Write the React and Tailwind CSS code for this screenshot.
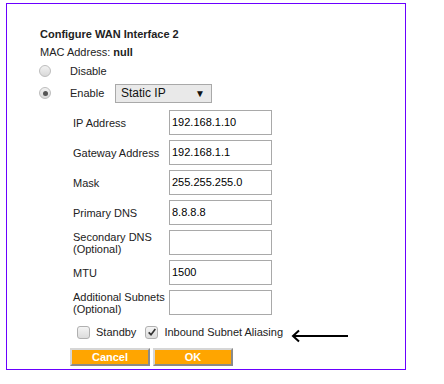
import React from 'react';

const fields = [
  { label: 'IP Address', value: '192.168.1.10' },
  { label: 'Gateway Address', value: '192.168.1.1' },
  { label: 'Mask', value: '255.255.255.0' },
  { label: 'Primary DNS', value: '8.8.8.8' },
  { label: 'Secondary DNS', sub: '(Optional)', value: '' },
  { label: 'MTU', value: '1500' },
  { label: 'Additional Subnets', sub: '(Optional)', value: '' },
];

// old-school grey radio look
const Radio = ({ checked }) => (
  <span className="w-[12px] h-[12px] rounded-full border border-[#bdbdbd] bg-gradient-to-b from-[#f2f2f2] to-[#d9d9d9] flex items-center justify-center">
    {checked && <span className="w-[5px] h-[5px] rounded-full bg-[#555]" />}
  </span>
);

const Checkbox = ({ checked }) => (
  <span className="w-[13px] h-[13px] rounded-[3px] border border-[#b0b0b0] bg-gradient-to-b from-[#f4f4f4] to-[#dcdcdc] flex items-center justify-center">
    {checked && (
      <svg viewBox="0 0 12 12" className="w-[10px] h-[10px]">
        <path d="M2 6.5 L4.8 9.2 L10 2.5" fill="none" stroke="#333" strokeWidth="2" />
      </svg>
    )}
  </span>
);

const Button = ({ children }) => (
  <button className="w-[80px] h-[18px] bg-[#ffa500] border-2 border-t-[#d6d6d6] border-l-[#d6d6d6] border-b-[#8a8a8a] border-r-[#8a8a8a] text-white font-bold text-[11px] leading-[14px]">
    {children}
  </button>
);

export default function App() {
  return (
    <div className="w-[444px] h-[384px] bg-white pt-[3px] pl-[6px] font-['Liberation_Sans',Arial,sans-serif] text-[11px] text-[#222]">
      <div className="w-[400px] h-[367px] border border-[#6a00ff] pl-[33px] pt-[24px]">
        <div className="font-bold leading-[13px]">Configure WAN Interface 2</div>
        <div className="mt-[5px] leading-[13px]">
          MAC Address: <span className="font-bold">null</span>
        </div>

        <div className="mt-[1px] h-[22px] flex items-center">
          <span className="w-[31px] -ml-[1px] flex">
            <Radio />
          </span>
          <span>Disable</span>
        </div>
        <div className="h-[22px] flex items-center">
          <span className="w-[31px] -ml-[1px] flex">
            <Radio checked />
          </span>
          <span className="w-[45px]">Enable</span>
          <div className="w-[97px] h-[19px] border border-[#a9a9a9] bg-[#e9e9e9] flex items-center justify-between pl-[5px] pr-[6px] text-[12px] text-[#111]">
            <span>Static IP</span>
            <span className="text-[10px]">▼</span>
          </div>
        </div>

        <div className="mt-[6px] flex flex-col gap-[5px]">
          {fields.map((f) => (
            <div key={f.label} className="h-[25px] flex items-center">
              <div className="ml-[33px] w-[96px] leading-[12px]">
                <div>{f.label}</div>
                {f.sub && <div>{f.sub}</div>}
              </div>
              <div className="w-[103px] h-[25px] border border-[#a9a9a9] bg-white flex items-center pl-[2px] text-[11px] text-black">
                {f.value}
              </div>
            </div>
          ))}
        </div>

        <div className="mt-[6px] h-[22px] flex items-center">
          <span className="ml-[37px] flex">
            <Checkbox />
          </span>
          <span className="ml-[6px]">Standby</span>
          <span className="ml-[9px] flex">
            <Checkbox checked />
          </span>
          <span className="ml-[6px]">Inbound Subnet Aliasing</span>
          <svg viewBox="0 0 58 14" className="ml-[8px] mt-[8px] w-[58px] h-[14px]">
            <path d="M2 7 H57" stroke="#000" strokeWidth="2" />
            <path d="M8 1.5 L2 7 L8 12.5" fill="none" stroke="#000" strokeWidth="2" />
          </svg>
        </div>

        <div className="mt-[5px] ml-[30px] flex gap-[3px]">
          <Button>Cancel</Button>
          <Button>OK</Button>
        </div>
      </div>
    </div>
  );
}
